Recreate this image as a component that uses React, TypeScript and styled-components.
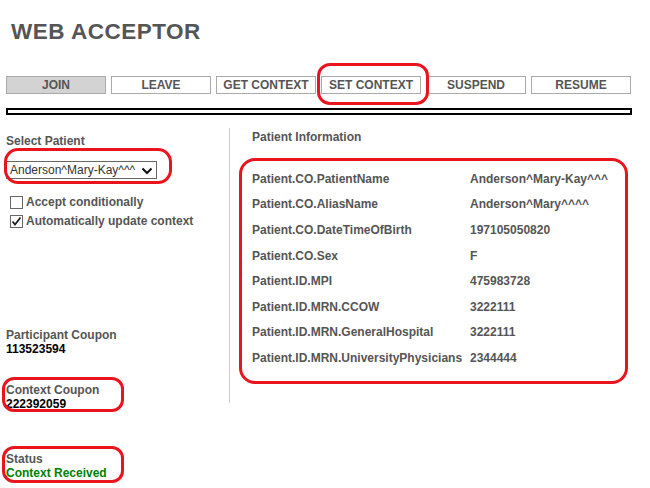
import styled, { createGlobalStyle } from "styled-components";

const GlobalStyle = createGlobalStyle`
  html, body {
    margin: 0;
    padding: 0;
    background: #fff;
  }
  body {
    font-family: "Liberation Sans", Arial, sans-serif;
    color: #555;
  }
`;

const RED = "#e8151f";

const buttons = ["JOIN", "LEAVE", "GET CONTEXT", "SET CONTEXT", "SUSPEND", "RESUME"];

const patientInfo: [string, string][] = [
  ["Patient.CO.PatientName", "Anderson^Mary-Kay^^^"],
  ["Patient.CO.AliasName", "Anderson^Mary^^^^"],
  ["Patient.CO.DateTimeOfBirth", "197105050820"],
  ["Patient.CO.Sex", "F"],
  ["Patient.ID.MPI", "475983728"],
  ["Patient.ID.MRN.CCOW", "3222111"],
  ["Patient.ID.MRN.GeneralHospital", "3222111"],
  ["Patient.ID.MRN.UniversityPhysicians", "2344444"],
];

const App = () => {
  return (
    <Page>
      <GlobalStyle />
      <Title>WEB ACCEPTOR</Title>

      <Toolbar>
        {buttons.map((b) =>
          b === "SET CONTEXT" ? (
            <Highlight key={b} $top={-13} $right={-8} $bottom={-11} $left={-4} $radius={13}>
              <ActionButton>{b}</ActionButton>
            </Highlight>
          ) : (
            <ActionButton key={b} $active={b === "JOIN"}>
              {b}
            </ActionButton>
          )
        )}
      </Toolbar>

      <Progress />

      <Main>
        <LeftPanel>
          <Label>Select Patient</Label>
          <Highlight $top={-13} $right={-15} $bottom={-5} $left={-2} $radius={14} $mt={13} $fit>
            <SelectBox>
              <span>Anderson^Mary-Kay^^^</span>
              <svg width="12" height="8" viewBox="0 0 12 8">
                <path d="M1.5 1.5 L6 6 L10.5 1.5" fill="none" stroke="#111" strokeWidth="2" />
              </svg>
            </SelectBox>
          </Highlight>

          <CheckRow $mt={17}>
            <CheckBox />
            <CheckLabel>Accept conditionally</CheckLabel>
          </CheckRow>
          <CheckRow $mt={6}>
            <CheckBox>
              <svg width="11" height="11" viewBox="0 0 11 11">
                <path d="M1.5 5.5 L4 8.5 L9.5 1.5" fill="none" stroke="#222" strokeWidth="1.8" />
              </svg>
            </CheckBox>
            <CheckLabel>Automatically update context</CheckLabel>
          </CheckRow>

          <Field $mt={100}>
            <Label>Participant Coupon</Label>
            <Value>113523594</Value>
          </Field>

          <Highlight $top={-6} $right={105} $bottom={-1} $left={-4} $radius={12} $mt={27}>
            <Field>
              <Label>Context Coupon</Label>
              <Value>222392059</Value>
            </Field>
          </Highlight>

          <Highlight $top={-6} $right={105} $bottom={-3} $left={-4} $radius={12} $mt={41}>
            <Field>
              <Label>Status</Label>
              <Value $color="#008000">Context Received</Value>
            </Field>
          </Highlight>
        </LeftPanel>

        <RightPanel>
          <Heading>Patient Information</Heading>
          <InfoBox>
            {patientInfo.map(([k, v]) => (
              <InfoRow key={k}>
                <span>{k}</span>
                <span>{v}</span>
              </InfoRow>
            ))}
          </InfoBox>
        </RightPanel>
      </Main>
    </Page>
  );
};

const Page = styled.div`
  width: 650px;
  height: 488px;
  overflow: hidden;
  padding-top: 19px;
  box-sizing: border-box;
`;

const Title = styled.h1`
  margin: 0 0 0 11px;
  font-size: 22.5px;
  letter-spacing: 0.5px;
  line-height: 26px;
  font-weight: bold;
  color: #555;
`;

const Toolbar = styled.div`
  display: flex;
  gap: 5px;
  margin-top: 31px;
  padding-left: 6px;
`;

const ActionButton = styled.div<{ $active?: boolean }>`
  width: 100px;
  height: 18px;
  box-sizing: border-box;
  border: 1px solid #aaa;
  background: ${(p) => (p.$active ? "#d3d3d3" : "#fff")};
  color: #555;
  font-size: 12px;
  font-weight: bold;
  display: flex;
  align-items: center;
  justify-content: center;
`;

const Highlight = styled.div<{
  $top: number;
  $right: number;
  $bottom: number;
  $left: number;
  $radius: number;
  $mt?: number;
  $fit?: boolean;
}>`
  position: relative;
  margin-top: ${(p) => p.$mt ?? 0}px;
  align-self: ${(p) => (p.$fit ? "flex-start" : "stretch")};

  &::after {
    content: "";
    position: absolute;
    top: ${(p) => p.$top}px;
    right: ${(p) => p.$right}px;
    bottom: ${(p) => p.$bottom}px;
    left: ${(p) => p.$left}px;
    border: 3px solid ${RED};
    border-radius: ${(p) => p.$radius}px;
    pointer-events: none;
  }
`;

const Progress = styled.div`
  margin: 14px 0 0 6px;
  width: 626px;
  height: 7px;
  box-sizing: border-box;
  border: 2px solid #000;
`;

const Main = styled.div`
  display: flex;
  align-items: flex-start;
  padding-left: 6px;
`;

const LeftPanel = styled.div`
  width: 223px;
  padding-top: 19px;
  display: flex;
  flex-direction: column;
`;

const Label = styled.div`
  font-size: 12px;
  line-height: 14px;
  font-weight: bold;
  color: #555;
`;

const Value = styled.div<{ $color?: string }>`
  font-size: 12px;
  line-height: 14px;
  font-weight: bold;
  color: ${(p) => p.$color ?? "#000"};
`;

const Field = styled.div<{ $mt?: number }>`
  margin-top: ${(p) => p.$mt ?? 0}px;
`;

const SelectBox = styled.div`
  width: 151px;
  height: 18px;
  box-sizing: border-box;
  border: 1px solid #666;
  display: flex;
  align-items: center;
  justify-content: space-between;
  padding: 0 3px 0 3px;
  font-size: 12px;
  color: #333;

  svg {
    margin-top: 1px;
  }
`;

const CheckRow = styled.div<{ $mt: number }>`
  display: flex;
  align-items: center;
  gap: 3px;
  margin-top: ${(p) => p.$mt}px;
  padding-left: 4px;
`;

const CheckBox = styled.div`
  width: 13px;
  height: 13px;
  box-sizing: border-box;
  border: 1px solid #666;
  display: flex;
  align-items: center;
  justify-content: center;
`;

const CheckLabel = styled.span`
  font-size: 12px;
  line-height: 13px;
  font-weight: bold;
  color: #555;
`;

const RightPanel = styled.div`
  margin-top: 13px;
  border-left: 1px solid #ccc;
  padding: 2px 0 19px 9px;
  height: 275px;
  box-sizing: border-box;
`;

const Heading = styled.div`
  margin-left: 13px;
  font-size: 12px;
  line-height: 14px;
  font-weight: bold;
  color: #555;
`;

const InfoBox = styled.div`
  margin-top: 14px;
  width: 389px;
  box-sizing: border-box;
  border: 3px solid ${RED};
  border-radius: 16px;
  padding: 5px 0 10px 10px;
`;

const InfoRow = styled.div`
  display: grid;
  grid-template-columns: 218px 1fr;
  height: 25.6px;
  align-items: center;
  font-size: 12px;
  font-weight: bold;
  color: #555;
`;

export default App;
